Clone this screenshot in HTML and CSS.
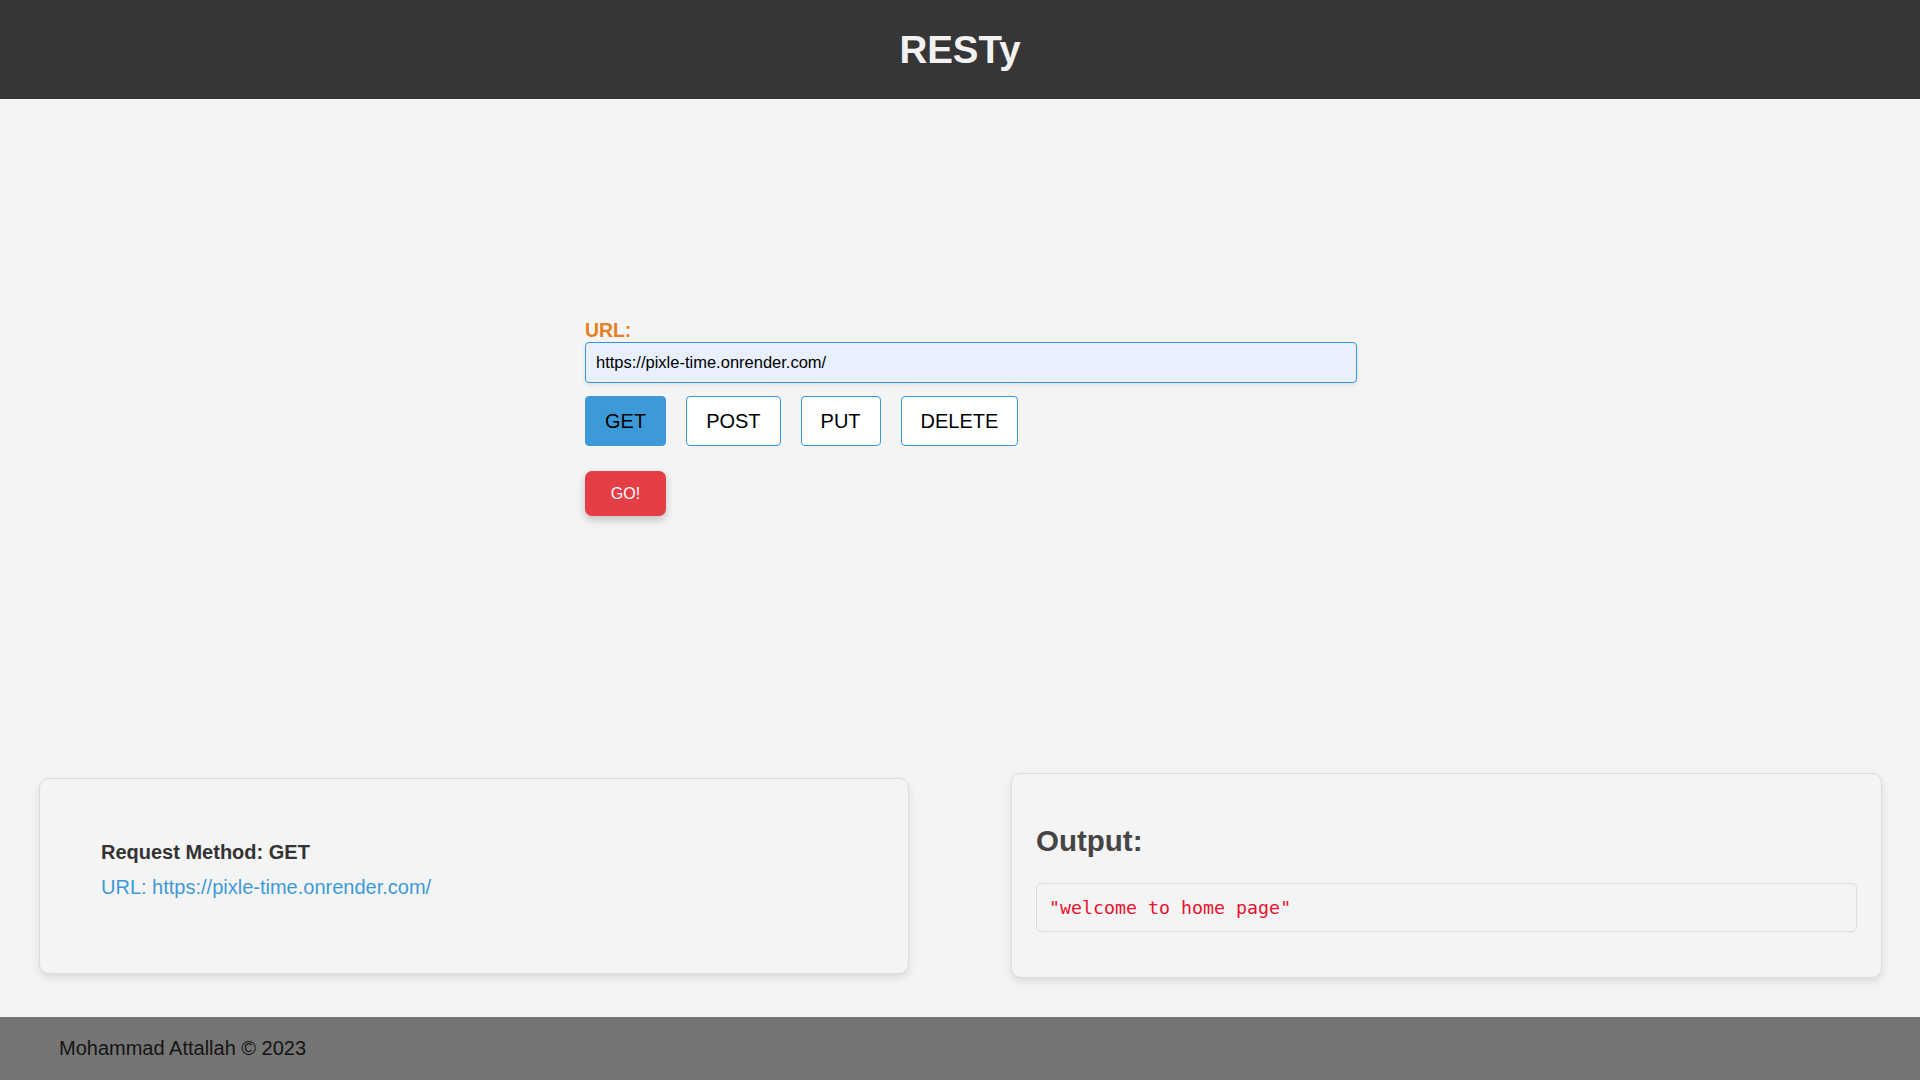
FILE: index.html
```html
<!DOCTYPE html>
<html lang="en">
<head>
<meta charset="utf-8">
<title>RESTy</title>
<link rel="stylesheet" href="styles.css">
</head>
<body>
  <header class="app-header">
    <h1 class="app-title">RESTy</h1>
  </header>
  <main class="app-main">
    <section class="form-section">
      <form class="req-form">
        <label class="url-label" for="url">URL:</label>
        <input class="url-input" id="url" type="text" value="https://pixle-time.onrender.com/">
        <div class="methods">
          <button type="button" class="method active">GET</button>
          <button type="button" class="method">POST</button>
          <button type="button" class="method">PUT</button>
          <button type="button" class="method">DELETE</button>
        </div>
        <button type="button" class="go-btn">GO!</button>
      </form>
    </section>
    <section class="results">
      <div class="card request-card">
        <p class="req-method">Request Method: GET</p>
        <p class="req-url">URL: https://pixle-time.onrender.com/</p>
      </div>
      <div class="card output-card">
        <h2 class="output-title">Output:</h2>
        <pre class="output-box">"welcome to home page"</pre>
      </div>
    </section>
  </main>
  <footer class="app-footer">
    <span class="footer-text">Mohammad Attallah © 2023</span>
  </footer>
</body>
</html>
```
FILE: styles.css
```css
* { box-sizing: border-box; }

html, body {
  margin: 0;
  padding: 0;
}

body {
  font-family: "Liberation Sans", Arial, sans-serif;
  background: #f4f4f4;
  color: #333;
  min-height: 100vh;
  display: flex;
  flex-direction: column;
}

.app-header {
  height: 99px;
  background: #363636;
  display: flex;
  align-items: center;
  justify-content: center;
  padding-top: 1px;
}

.app-title {
  margin: 0;
  font-size: 38.5px;
  font-weight: bold;
  color: #f2f2f2;
  line-height: normal;
}

.app-main {
  flex: 1;
  display: flex;
  flex-direction: column;
}

.form-section {
  padding-top: 220px;
}

.req-form {
  width: 750px;
  margin: 0 auto;
  display: flex;
  flex-direction: column;
  align-items: flex-start;
}

.url-label {
  display: block;
  font-size: 19.4px;
  font-weight: bold;
  color: #e67e22;
  line-height: 22px;
  margin-bottom: 1px;
}

.url-input {
  box-sizing: content-box;
  width: 100%;
  height: 19px;
  padding: 10px;
  border: 1px solid #3498db;
  border-radius: 4px;
  background: #e8f0fe;
  font-family: "Liberation Sans", Arial, sans-serif;
  font-size: 16.5px;
  color: #000;
  box-shadow: 0 2px 4px rgba(0, 0, 0, 0.08);
  outline: none;
}

.methods {
  display: flex;
  gap: 20px;
  margin-top: 13px;
}

.method {
  height: 50px;
  padding: 0 19px;
  border: 1px solid #3498db;
  border-radius: 4px;
  background: #fff;
  font-family: "Liberation Sans", Arial, sans-serif;
  font-size: 20px;
  color: #000;
  line-height: 1;
}

.method.active {
  background: #3d9ad8;
  border-color: #3d9ad8;
}

.go-btn {
  margin-top: 25px;
  height: 45px;
  width: 81px;
  padding: 0;
  border: none;
  border-radius: 7px;
  background: #e53e45;
  color: #fff;
  font-family: "Liberation Sans", Arial, sans-serif;
  font-size: 16px;
  line-height: 1;
  box-shadow: 0 4px 8px rgba(0, 0, 0, 0.2);
}

.results {
  margin-top: auto;
  padding: 0 38px 39px 39px;
  display: flex;
  align-items: center;
  justify-content: space-between;
}

.card {
  background: #f4f4f4;
  border: 1px solid #dcdcdc;
  border-radius: 10px;
  box-shadow: 0 4px 8px rgba(0, 0, 0, 0.1);
}

.request-card {
  width: 870px;
  padding: 62px 61px 74px 61px;
}

.req-method {
  margin: 0 0 12px 0;
  font-size: 20px;
  font-weight: bold;
  line-height: 23px;
  color: #333;
}

.req-url {
  margin: 0;
  font-size: 20px;
  line-height: 23px;
  color: #3d9ad8;
}

.output-card {
  width: 871px;
  padding: 24px;
}

.output-title {
  margin: 26px 0 25px 0;
  font-size: 29.5px;
  font-weight: bold;
  line-height: 34px;
  color: #454545;
}

.output-box {
  margin: 0 0 21px 0;
  padding: 13px 12px;
  border: 1px solid #dcdcdc;
  border-radius: 5px;
  background: #f4f4f4;
  font-family: "DejaVu Sans Mono", "Liberation Mono", monospace;
  font-size: 18.3px;
  line-height: 21px;
  color: #e8112d;
}

.app-footer {
  height: 63px;
  background: #757575;
  display: flex;
  align-items: center;
  padding: 0 59px;
}

.footer-text {
  font-size: 20px;
  color: #141414;
}
```
